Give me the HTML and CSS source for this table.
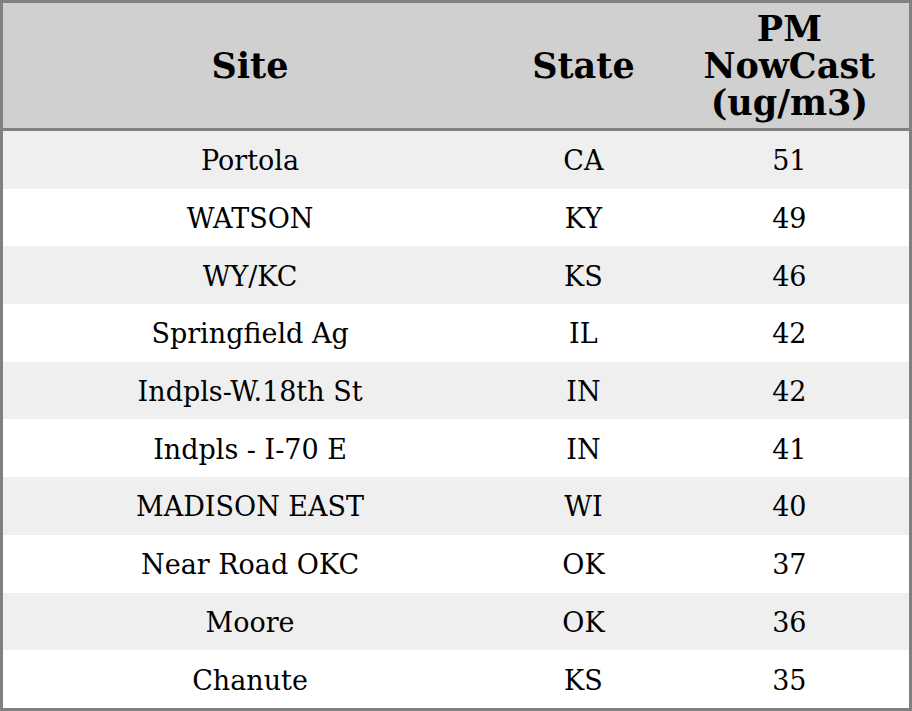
FILE: index.html
```html
<!DOCTYPE html>
<html>
<head>
<meta charset="utf-8">
<link rel="stylesheet" href="styles.css">
</head>
<body>
<table class="aq">
  <colgroup>
    <col class="c-site">
    <col class="c-state">
    <col class="c-pm">
  </colgroup>
  <thead>
    <tr><th>Site</th><th>State</th><th>PM<br>NowCast<br>(ug/m3)</th></tr>
  </thead>
  <tbody>
    <tr><td>Portola</td><td>CA</td><td>51</td></tr>
    <tr><td>WATSON</td><td>KY</td><td>49</td></tr>
    <tr><td>WY/KC</td><td>KS</td><td>46</td></tr>
    <tr><td>Springfield Ag</td><td>IL</td><td>42</td></tr>
    <tr><td>Indpls-W.18th St</td><td>IN</td><td>42</td></tr>
    <tr><td>Indpls - I-70 E</td><td>IN</td><td>41</td></tr>
    <tr><td>MADISON EAST</td><td>WI</td><td>40</td></tr>
    <tr><td>Near Road OKC</td><td>OK</td><td>37</td></tr>
    <tr><td>Moore</td><td>OK</td><td>36</td></tr>
    <tr><td>Chanute</td><td>KS</td><td>35</td></tr>
  </tbody>
</table>
</body>
</html>
```
FILE: styles.css
```css
html, body {
  margin: 0;
  padding: 0;
  background: #ffffff;
}
.aq {
  width: 912px;
  height: 711px;
  border-collapse: collapse;
  border: 3px solid #808080;
  font-family: "DejaVu Serif", serif;
  color: #000;
  table-layout: fixed;
}
.c-site { width: 494px; }
.c-state { width: 172px; }
.c-pm { width: 240px; }
.aq th {
  background: #d0d0d0;
  font-weight: bold;
  font-size: 35px;
  line-height: 37px;
  height: 128px;
  padding: 0;
  text-align: center;
  vertical-align: middle;
  border-bottom: 3px solid #808080;
  box-sizing: border-box;
}
.aq td {
  font-size: 27px;
  height: 55.7px;
  padding: 2px 0 0;
  text-align: center;
  vertical-align: middle;
}
.aq tbody tr:nth-child(odd) td { background: #efefef; }
.aq tbody tr:nth-child(even) td { background: #ffffff; }
```
